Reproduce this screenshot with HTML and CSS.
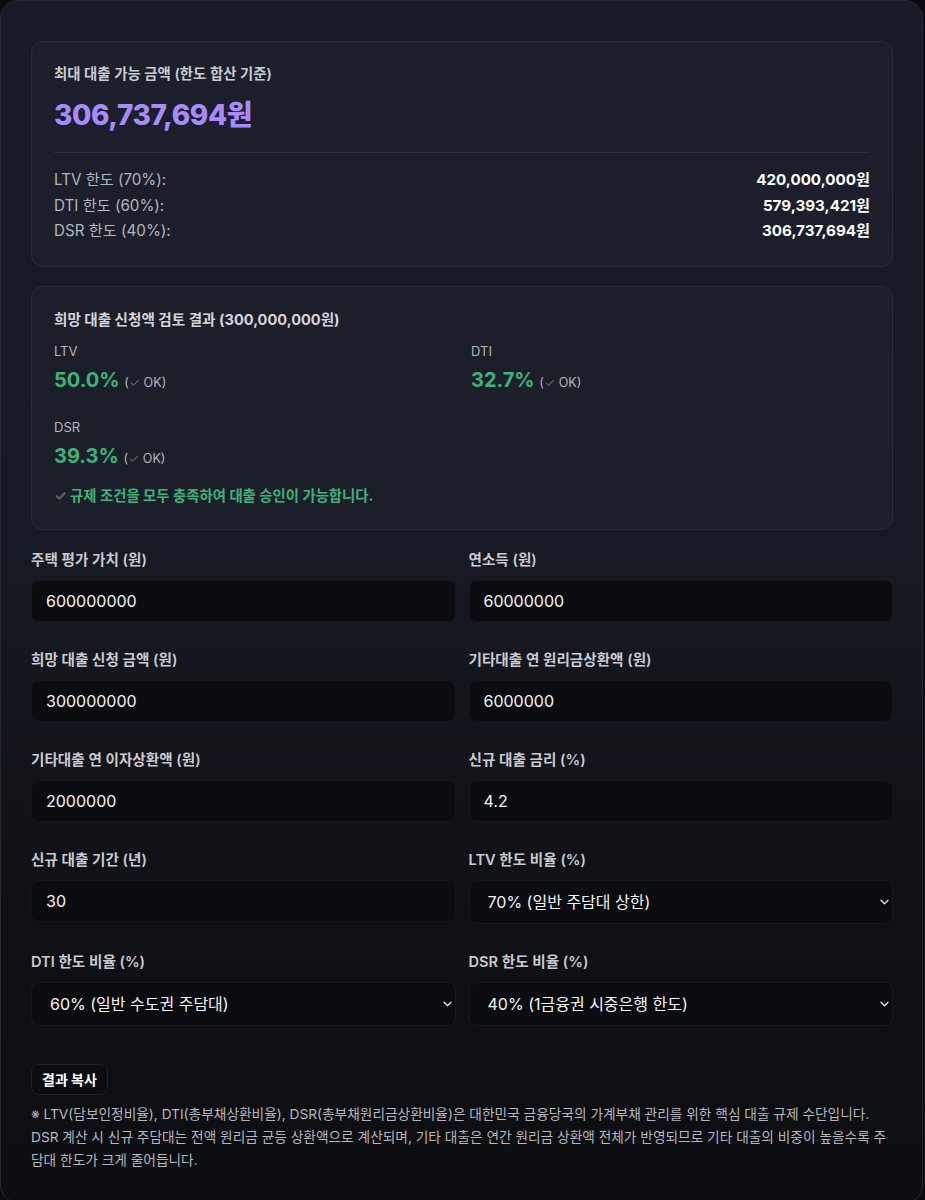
FILE: index.html
```html
<!DOCTYPE html>
<html>
<head>
  <meta charset="UTF-8">
  <title>주택담보대출 한도 계산기</title>
  <link rel="stylesheet" href="styles.css">
</head>
<body>

<div class="calc">

  <div class="panel summary">
    <div class="panel-title">최대 대출 가능 금액 (한도 합산 기준)</div>
    <div class="max-amount">306,737,694원</div>
    <div class="limit-rows">
      <div class="limit-row"><span>LTV 한도 (70%):</span><b>420,000,000원</b></div>
      <div class="limit-row"><span>DTI 한도 (60%):</span><b>579,393,421원</b></div>
      <div class="limit-row"><span>DSR 한도 (40%):</span><b>306,737,694원</b></div>
    </div>
  </div>

  <div class="panel review">
    <div class="panel-title strong">희망 대출 신청액 검토 결과 (300,000,000원)</div>
    <div class="ratio-grid">
      <div class="ratio">
        <div class="ratio-label">LTV</div>
        <div class="ratio-value">50.0% <span class="ok">(<i>✓</i> OK)</span></div>
      </div>
      <div class="ratio">
        <div class="ratio-label">DTI</div>
        <div class="ratio-value">32.7% <span class="ok">(<i>✓</i> OK)</span></div>
      </div>
      <div class="ratio">
        <div class="ratio-label">DSR</div>
        <div class="ratio-value">39.3% <span class="ok">(<i>✓</i> OK)</span></div>
      </div>
    </div>
    <div class="verdict"><i>✓</i> 규제 조건을 모두 충족하여 대출 승인이 가능합니다.</div>
  </div>

  <div class="form-grid">
    <label class="field">
      <span>주택 평가 가치 (원)</span>
      <input type="text" value="600000000">
    </label>
    <label class="field">
      <span>연소득 (원)</span>
      <input type="text" value="60000000">
    </label>
    <label class="field">
      <span>희망 대출 신청 금액 (원)</span>
      <input type="text" value="300000000">
    </label>
    <label class="field">
      <span>기타대출 연 원리금상환액 (원)</span>
      <input type="text" value="6000000">
    </label>
    <label class="field">
      <span>기타대출 연 이자상환액 (원)</span>
      <input type="text" value="2000000">
    </label>
    <label class="field">
      <span>신규 대출 금리 (%)</span>
      <input type="text" value="4.2">
    </label>
    <label class="field">
      <span>신규 대출 기간 (년)</span>
      <input type="text" value="30">
    </label>
    <label class="field">
      <span>LTV 한도 비율 (%)</span>
      <div class="select-wrap">
        <select><option>70% (일반 주담대 상한)</option></select>
        <svg class="chevron" width="9" height="6" viewBox="0 0 9 6"><path d="M1 1.2l3.5 3.5 3.5-3.5" fill="none" stroke="#e6e7ea" stroke-width="1.3" stroke-linecap="round" stroke-linejoin="round"/></svg>
      </div>
    </label>
    <label class="field">
      <span>DTI 한도 비율 (%)</span>
      <div class="select-wrap">
        <select><option>60% (일반 수도권 주담대)</option></select>
        <svg class="chevron" width="9" height="6" viewBox="0 0 9 6"><path d="M1 1.2l3.5 3.5 3.5-3.5" fill="none" stroke="#e6e7ea" stroke-width="1.3" stroke-linecap="round" stroke-linejoin="round"/></svg>
      </div>
    </label>
    <label class="field">
      <span>DSR 한도 비율 (%)</span>
      <div class="select-wrap">
        <select><option>40% (1금융권 시중은행 한도)</option></select>
        <svg class="chevron" width="9" height="6" viewBox="0 0 9 6"><path d="M1 1.2l3.5 3.5 3.5-3.5" fill="none" stroke="#e6e7ea" stroke-width="1.3" stroke-linecap="round" stroke-linejoin="round"/></svg>
      </div>
    </label>
  </div>

  <div class="actions">
    <button type="button">결과 복사</button>
  </div>

  <p class="note">※ LTV(담보인정비율), DTI(총부채상환비율), DSR(총부채원리금상환비율)은 대한민국 금융당국의 가계부채 관리를 위한 핵심 대출 규제 수단입니다. DSR 계산 시 신규 주담대는 전액 원리금 균등 상환액으로 계산되며, 기타 대출은 연간 원리금 상환액 전체가 반영되므로 기타 대출의 비중이 높을수록 주담대 한도가 크게 줄어듭니다.</p>

</div>

</body>
</html>
```

FILE: styles.css
```css
* {
  box-sizing: border-box;
}

body {
  margin: 0;
  background: #0b0c0f;
  font-family: "Inter", "Noto Sans CJK KR", sans-serif;
  color: #e6e7ea;
}

.calc {
  width: 923px;
  min-height: 1198px;
  padding: 40px 29px 30px 30px;
  border: 1px solid #262a35;
  border-radius: 18px;
  background: linear-gradient(180deg, #191c28 0%, #171a24 45%, #101115 75%, #0d0e11 100%);
  display: flex;
  flex-direction: column;
}

/* result panels */
.panel {
  border: 1px solid #2a2e3b;
  border-radius: 12px;
  background: rgba(32, 35, 48, 0.55);
}

.summary {
  padding: 21px 22px 22px;
}

.panel-title {
  font-size: 14.4px;
  line-height: 22px;
  font-weight: 600;
  color: #c9cbd1;
}

.panel-title.strong {
  font-size: 14.6px;
  font-weight: 700;
  color: #d3d5db;
}

.max-amount {
  margin-top: 12px;
  font-size: 28px;
  line-height: 36px;
  font-weight: 800;
  color: #a78bfa;
  letter-spacing: -0.4px;
}

.limit-rows {
  margin-top: 19px;
  padding-top: 14px;
  border-top: 1px solid #2c303c;
}

.limit-row {
  display: flex;
  justify-content: space-between;
  font-size: 15.2px;
  line-height: 25.5px;
  color: #b3b6be;
}

.limit-row b {
  color: #ffffff;
  font-weight: 700;
}

.review {
  margin-top: 19px;
  padding: 22px 22px 23px;
}

.ratio-grid {
  margin-top: 11px;
  display: grid;
  grid-template-columns: 1fr 1fr;
  column-gap: 18px;
  row-gap: 21px;
}

.ratio-label {
  font-size: 13px;
  line-height: 18px;
  color: #b3b6be;
}

.ratio-value {
  margin-top: 6px;
  font-size: 20px;
  line-height: 28px;
  font-weight: 700;
  color: #3bb47a;
}

.ok {
  font-size: 12.6px;
  font-weight: 400;
  color: #b3b6be;
}

.ok i,
.verdict i {
  font-style: normal;
  color: #5d6068;
}

.verdict {
  margin-top: 13px;
  font-size: 14.4px;
  line-height: 20px;
  font-weight: 700;
  color: #3bb47a;
}

/* input form */
.form-grid {
  margin-top: 20px;
  display: grid;
  grid-template-columns: 1fr 1fr;
  column-gap: 13px;
  row-gap: 28px;
}

.field {
  display: flex;
  flex-direction: column;
}

.field > span {
  font-size: 14.6px;
  line-height: 20px;
  font-weight: 600;
  color: #c9cbd1;
  margin-bottom: 10px;
}

.field input,
.field select {
  width: 100%;
  height: 42px;
  padding: 0 14px;
  border: 1px solid #15161b;
  border-radius: 8px;
  background: #0b0c0f;
  color: #f4f4f6;
  font-family: inherit;
  font-size: 16px;
  outline: none;
}

.select-wrap {
  position: relative;
}

.field select {
  height: 44px;
  padding: 0 18px;
  appearance: none;
  -webkit-appearance: none;
  border-color: #181a20;
}

.chevron {
  position: absolute;
  right: 4px;
  top: 19px;
  pointer-events: none;
}

.actions {
  margin-top: 38px;
}

.actions button {
  height: 31px;
  padding: 0 10px;
  border: 1px solid #1f2128;
  border-radius: 8px;
  background: #0c0d10;
  color: #ffffff;
  font-family: inherit;
  font-size: 14px;
  font-weight: 700;
  cursor: pointer;
}

.note {
  margin: 8px 0 0;
  font-size: 13.7px;
  line-height: 23px;
  color: #b5b7bd;
}
```
